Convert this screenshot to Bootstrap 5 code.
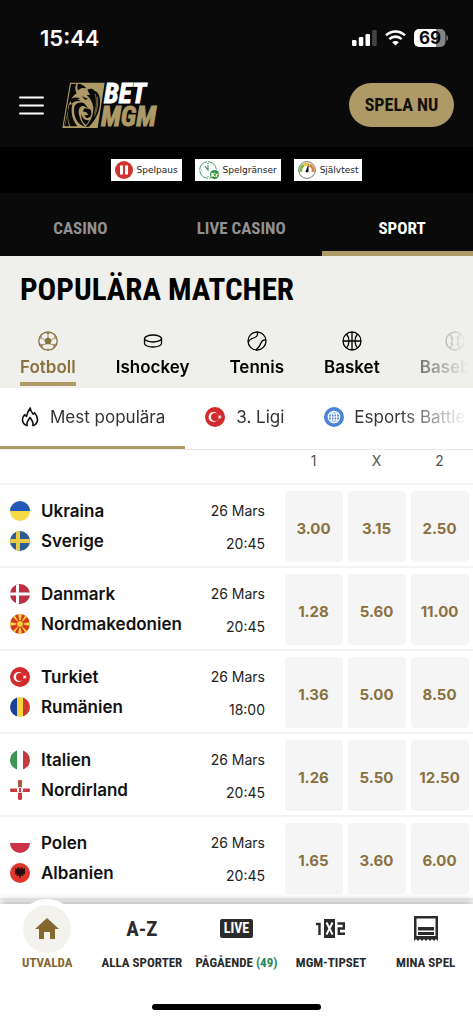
<!DOCTYPE html>
<html lang="sv">
<head>
<meta charset="utf-8">
<meta name="viewport" content="width=device-width, initial-scale=1">
<title>BetMGM – Populära matcher</title>
<link href="https://cdn.jsdelivr.net/npm/bootstrap@5.3.0/dist/css/bootstrap.min.css" rel="stylesheet">
<style>
:root { --gold: #ae9a66; --gold-dark: #8a7140; --ink: #0a0a0a; --narrow: "Roboto Condensed", "Liberation Sans Narrow", "Liberation Sans", sans-serif; }
body { font-family: Inter, "Liberation Sans", sans-serif; background: #fff; color: #111; font-size: 16px; }
a { color: inherit; text-decoration: none; }
.dark-top { background: #0a0a0a; color: #fff; }
.status-bar { height: 76px; padding: 0 25px 0 40px; }
.clock { font-size: 22px; font-weight: 600; }
.brand-bar { height: 71px; padding: 0 19px 13px; }
.brand-logo { margin-left: 18px; }
.play-btn { background: var(--gold); color: #14100a; border: 0; border-radius: 22px; width: 105px; height: 44px; font: bold 18px/44px var(--narrow); padding: 0; }
.safe-bar { height: 46px; background: #000; gap: 13px; }
.safe-link { background: #fff; color: #222; height: 22px; padding: 0 4px; gap: 4px; font: 9px/22px "DejaVu Sans", sans-serif; }
.main-tabs { height: 63px; overflow: hidden; }
.main-tabs a { flex: 0 0 34%; color: #919191; font: bold 17px/70px var(--narrow); text-align: center; border-bottom: 5px solid transparent; height: 63px; }
.main-tabs a.active { color: #fff; border-color: var(--gold); }
.sports-panel { background: #efefec; }
.page-title { font: bold 31px/40px var(--narrow); color: #000; margin: 0; padding: 14px 20px 0; }
.fade-right { -webkit-mask-image: linear-gradient(to right, #000 84%, transparent 99%); mask-image: linear-gradient(to right, #000 84%, transparent 99%); }
.sport-tabs { gap: 40px; padding: 21px 0 2px 20px; overflow: hidden; color: #000; }
.sport-tabs a { flex: none; font-weight: 600; font-size: 17px; line-height: 24px; border-bottom: 4px solid transparent; height: 55px; }
.sport-tabs a.active { color: var(--gold-dark); border-color: var(--gold); }
.sport-tabs svg { display: block; margin: 0 auto 4px; }
.league-wrap { border-bottom: 1px solid #e9e9e9; }
.league-tabs { overflow: hidden; color: #333; }
.league-tabs a { flex: none; height: 61px; line-height: 60px; font-size: 17px; gap: 10px; padding: 0 20px; border-bottom: 3px solid transparent; }
.league-tabs a.active { border-color: var(--gold); }
.odds-table { width: 100%; table-layout: fixed; border-collapse: separate; border-spacing: 0; }
.col-time { width: 84px; }
.col-gap { width: 17px; }
.col-odd { width: 63px; }
.col-edge { width: 2px; }
.odds-table thead th { height: 35px; font-size: 14px; font-weight: 400; color: #555; text-align: center; padding: 0 0 12px; border-bottom: 2px solid #f3f3f3; }
.odds-table tbody td { height: 83px; padding: 0; border-bottom: 2px solid #f3f3f3; }
.team { gap: 10px; padding-left: 10px; height: 30px; font-weight: 600; font-size: 17px; line-height: 28px; }
.team svg { flex: none; }
.odds-table tbody .kickoff { padding-top: 2px; font-size: 14px; line-height: 33px; text-align: right; color: #222; white-space: nowrap; }
.odd-btn { display: block; width: 58px; height: 71px; margin: 2px auto 0; border: 0; border-radius: 4px; background: #f5f5f5; color: var(--gold-dark); font-weight: 700; font-size: 15px; padding: 6px 0 0; }
.bottom-bar { background: #fff; box-shadow: 0 -3px 8px rgba(0,0,0,.28); height: 120px; }
.bottom-nav a { flex: 1 1 0; color: #2b2b2b; font: bold 13px/20px var(--narrow); text-align: center; white-space: nowrap; }
.bottom-nav a.active { color: #85682f; }
.nav-pic { height: 49px; display: flex; align-items: center; justify-content: center; }
.home-disc { width: 48px; height: 48px; border-radius: 50%; background: #f4f2ed; box-shadow: 0 0 0 6px #fff; }
.bottom-nav .az { font-size: 21px; }
.live-chip { background: #2b2b2b; color: #fff; font: bold 14px/19px var(--narrow); padding: 0 4px; border-radius: 2px; }
.count { color: #25875d; }
.home-line { width: 169px; height: 6px; border-radius: 3px; background: #000; margin: 31px auto 0; }
</style>
</head>
<body>
<svg width="0" height="0" class="position-absolute" aria-hidden="true">
  <defs>
    <clipPath id="disc"><circle cx="10" cy="10" r="10"/></clipPath>
    <symbol id="f-tr" viewBox="0 0 20 20"><circle cx="10" cy="10" r="10" fill="#d32b2c"/><circle cx="8.6" cy="10" r="5" fill="#fff"/><circle cx="10" cy="10" r="4" fill="#d32b2c"/><path d="M15.5 7.8v1.6l1.6.6-1.6.6v1.6l-1-1.3-1.7.5 1-1.4-1-1.4 1.7.5z" fill="#fff"/></symbol>
  </defs>
</svg>
<div class="d-flex flex-column min-vh-100">
<header class="dark-top">
  <div class="status-bar d-flex align-items-center justify-content-between">
    <span class="clock">15:44</span>
    <span class="d-flex align-items-center gap-2">
      <svg width="25" height="16" viewBox="0 0 25 16" fill="#fff"><rect y="10" width="4.5" height="6" rx="1.3"/><rect x="6.8" y="7" width="4.5" height="9" rx="1.3"/><rect x="13.5" y="4" width="4.5" height="12" rx="1.3"/><rect x="20.2" y="0" width="4.5" height="16" rx="1.3" fill="#444"/></svg>
      <svg width="21" height="16" viewBox="0 0 21 16" fill="none" stroke="#fff" stroke-width="2.6"><path d="M1 5.4a13.6 13.6 0 0 1 19 0M4.4 9.1a8.7 8.7 0 0 1 12.2 0"/><path d="M10.5 15.6 7.2 12.3a4.7 4.7 0 0 1 6.6 0z" fill="#fff" stroke="none"/></svg>
      <svg width="34" height="18" viewBox="0 0 34 18"><path d="M5 0h18v18H5a5 5 0 0 1-5-5V5a5 5 0 0 1 5-5z" fill="#fff"/><path d="M22 0h4.500a5 5 0 0 1 5 5v8a5 5 0 0 1-5 5H22zM32.500 6c2 1 2 5 0 6z" fill="#858585"/><text x="16" y="15" text-anchor="middle" font-family="Inter, sans-serif" font-weight="700" font-size="17" fill="#0a0a0a">69</text></svg>
    </span>
  </div>
  <div class="brand-bar d-flex align-items-center">
    <button class="btn p-0 border-0 lh-1" aria-label="Meny"><svg width="25" height="19" viewBox="0 0 25 19" stroke="#fff" stroke-width="2.2" stroke-linecap="round"><path d="M1.1 1.5h22.8M1.1 9.5h22.8M1.1 17.5h22.8"/></svg></button>
    <a href="#" class="brand-logo lh-1" aria-label="BetMGM"><svg width="101" height="48" viewBox="0 0 101 48">
      <g transform="scale(.3333) translate(-9 -7)">
        <path d="M33 12H137L116 148H10z" fill="#ae9a66"/>
        <g fill="#0a0a0a">
          <path d="M36 16 52 15C47 26 48 35 53 44 43 51 36 59 35 68 29 74 26 84 27 96L16 142H14z"/>
          <path d="M57 15C66 15 76 20 82 29L68 28 57 35C54 28 54 21 57 15z"/>
          <path d="M85 34C92 29 101 29 106 36 117 39 124 52 123 68 124 94 111 125 90 144L80 145C97 126 104 106 103 86 101 71 94 58 83 49L93 49z"/>
          <path d="M34 61C43 55 55 55 64 59L55 62 66 67 49 68 37 75z"/>
          <path d="M68 53 88 61 78 63z"/>
          <path d="M46 83C51 73 66 68 77 75L87 89 74 82C62 80 57 92 60 108 64 126 72 137 79 144 56 139 41 114 46 83z"/>
          <path d="M31 78 40 77C35 98 38 121 55 143H34C26 124 25 98 31 78z"/>
          <path d="M27 103C25 120 27 134 31 143H17z"/>
          <path d="M77 89 92 91C99 97 99 108 93 115L84 119 75 111 88 108 82 101 71 98z"/>
          <path d="M68 106C70 120 79 127 91 124L82 139C70 131 65 118 68 106z"/>
        </g>
        <path d="M108 45C114 61 113 85 107 104M115 54C118 73 115 95 106 113" fill="none" stroke="#ae9a66" stroke-width="2"/>
      </g>
      <g font-family="Roboto Condensed, Liberation Sans Narrow, sans-serif" font-weight="bold" font-style="italic" stroke-width=".9"><text x="42" y="22" font-size="27" fill="#fff" stroke="#fff">BET</text><text x="39" y="45" font-size="27" fill="#ae9a66" stroke="#ae9a66">MGM</text></g>
    </svg></a>
    <button class="play-btn ms-auto">SPELA NU</button>
  </div>
  <div class="safe-bar d-flex align-items-center justify-content-center">
    <a href="#" class="safe-link d-flex align-items-center"><svg width="18" height="18" viewBox="0 0 18 18"><circle cx="9" cy="9" r="9" fill="#cf3430"/><path d="M5 4.500h3v9H5zM10 4.500h3v9h-3z" fill="#fff"/></svg>Spelpaus</a>
    <a href="#" class="safe-link d-flex align-items-center"><svg width="20" height="18" viewBox="0 0 20 18" fill="none" stroke="#49996b"><circle cx="9" cy="9" r="8.300" stroke-dasharray="12 1"/><path d="M6 5.500 9 9V4M9 2v1M2 9h1M9 15v1" stroke-width="1.200"/><circle cx="15.500" cy="13.500" r="4.500" fill="#2f8f4e" stroke="none"/><text x="15.500" y="15.700" font-size="6" font-weight="bold" text-anchor="middle" fill="#fff" stroke="none">Kr</text></svg>Spelgränser</a>
    <a href="#" class="safe-link d-flex align-items-center"><svg width="18" height="18" viewBox="0 0 18 18" fill="none"><circle cx="9" cy="9" r="8.400" stroke="#777"/><path d="M3 11a6 6 0 0 1 3-7" stroke="#8bb63a" stroke-width="3"/><path d="M6 4a6 6 0 0 1 5-.5" stroke="#e7c33d" stroke-width="3"/><path d="M11.500 4a6 6 0 0 1 3.500 7" stroke="#d8873a" stroke-width="3"/><path d="M10.500 3 10.500 10.500a1.600 1.600 0 0 1-3 0z" fill="#111"/></svg>Självtest</a>
  </div>
  <nav class="main-tabs d-flex" aria-label="Huvudmeny"><a href="#">CASINO</a><a href="#">LIVE CASINO</a><a href="#" class="active">SPORT</a></nav>
</header>
<main>
  <section class="sports-panel">
    <h1 class="page-title">POPULÄRA MATCHER</h1>
    <div class="fade-right"><nav class="sport-tabs d-flex" aria-label="Sporter">
      <a href="#" class="active"><svg width="20" height="20" viewBox="0 0 20 20" fill="none" stroke="currentColor"><circle cx="10" cy="10" r="9.200" stroke-width="1.300"/><path d="m10 6 3.800 2.700-1.500 4.500H7.700L6.200 8.700zM7 1.500l3 2 3-2zM1 9l2.500-2 .5-3zM19 9l-2.500-2-.5-3zM4.500 16.500l.5-3-3-1zM15.500 16.500l-.5-3 3-1zM8 19l2-1.500 2 1.500z" fill="currentColor" stroke="none"/><path d="M10 3.500V6M3.500 7l2.700 1.700M16.500 7l-2.700 1.700M5 13.500l2.700-.3M15 13.500l-2.700-.3" stroke-width=".8"/></svg>Fotboll</a>
      <a href="#"><svg width="20" height="20" viewBox="0 0 20 20" fill="none" stroke="currentColor" stroke-width="1.300"><ellipse cx="10" cy="7.500" rx="8.500" ry="3.500"/><path d="M1.500 7.500v5c0 2 3.800 3.500 8.500 3.500s8.500-1.500 8.500-3.500v-5"/></svg>Ishockey</a>
      <a href="#"><svg width="20" height="20" viewBox="0 0 20 20" fill="none" stroke="currentColor" stroke-width="1.300"><circle cx="10" cy="10" r="9"/><path d="M10.500 1c.5 4-1 5-4 6-3 1-4.500 2-5 4M19 9c-2-.5-4 .2-5 3-1 3-3 5-5 7"/></svg>Tennis</a>
      <a href="#"><svg width="20" height="20" viewBox="0 0 20 20" fill="none" stroke="currentColor" stroke-width="1.300"><circle cx="10" cy="10" r="9"/><path d="M10 1v18M1 10h18M4.500 3c3.300 4 3.300 10 0 14M15.500 3c-3.300 4-3.300 10 0 14"/></svg>Basket</a>
      <a href="#" class="opacity-75"><svg width="20" height="20" viewBox="0 0 20 20" fill="none" stroke="currentColor" stroke-width="1.300"><circle cx="10" cy="10" r="9"/><path d="M5 3c3 4 3 10 0 14M15 3c-3 4-3 10 0 14M5.500 7.500l3-1M5.500 12.500l3 1M14.500 7.500l-3-1M14.500 12.500l-3 1"/></svg>Baseboll</a>
    </nav></div>
  </section>
  <div class="league-wrap"><div class="fade-right"><nav class="league-tabs d-flex" aria-label="Ligor">
    <a href="#" class="active d-flex align-items-center"><svg width="20" height="20" viewBox="0 0 20 20" fill="none" stroke="#111" stroke-width="1.600" stroke-linejoin="round"><path d="M7.500 18.800C4.500 18 2.500 15.800 2.500 12.600c0-2.300 1.300-3.700 2.200-4.900l1.800 1.800C7 6 8.500 3.500 10.200 1c.3 3 1.600 4.500 3 6.200l1.300-1.400c2 2.200 3 4.300 3 6.700 0 3.300-2 5.500-5 6.300"/><path d="M7.500 18.800c-2-3 .5-5 2.500-8.300 2 3.300 4.500 5.300 2.500 8.300"/></svg>Mest populära</a>
    <a href="#" class="d-flex align-items-center"><svg width="21" height="20"><use href="#f-tr" width="20" height="20"/></svg>3. Ligi</a>
    <a href="#" class="d-flex align-items-center"><svg width="20" height="20" viewBox="0 0 20 20" fill="none" stroke="#fff" stroke-width="1.100"><circle cx="10" cy="10" r="10" fill="#4b83d6" stroke="none"/><circle cx="10" cy="10" r="5.800"/><ellipse cx="10" cy="10" rx="2.800" ry="5.800"/><path d="M10 4v12M4 10h12M5 7h10M5 13h10"/></svg>Esports Battle</a>
  </nav></div></div>
  <table class="odds-table">
    <colgroup><col><col class="col-time"><col class="col-gap"><col class="col-odd"><col class="col-odd"><col class="col-odd"><col class="col-edge"></colgroup>
    <thead><tr><th colspan="3" aria-label="Match"></th><th scope="col">1</th><th scope="col">X</th><th scope="col">2</th><th></th></tr></thead>
    <tbody>
      <tr><td><div class="team d-flex align-items-center"><svg width="21" height="20"><g clip-path="url(#disc)"><path d="M0 0h20v10H0z" fill="#2458b8"/><path d="M0 10h20v10H0z" fill="#f6d946"/></g></svg>Ukraina</div><div class="team d-flex align-items-center"><svg width="21" height="20"><g clip-path="url(#disc)"><path d="M0 0h20v20H0z" fill="#285e91"/><path d="M6 0h4v20H6zM0 8h20v4H0z" fill="#edca45"/></g></svg>Sverige</div></td><td class="kickoff">26 Mars<br>20:45</td><td></td><td><button class="odd-btn">3.00</button></td><td><button class="odd-btn">3.15</button></td><td><button class="odd-btn">2.50</button></td><td></td></tr>
      <tr><td><div class="team d-flex align-items-center"><svg width="21" height="20"><g clip-path="url(#disc)"><path d="M0 0h20v20H0z" fill="#bd2f45"/><path d="M6 0h3v20H6zM0 8.500h20v3H0z" fill="#fff"/></g></svg>Danmark</div><div class="team d-flex align-items-center"><svg width="21" height="20"><g clip-path="url(#disc)"><path d="M0 0h20v20H0z" fill="#d23a20"/><path d="M8 0h4l-2 10zM8 20h4l-2-10zM0 8v4l10-2zM20 8v4l-10-2zM0 0h4l6 10zM20 0h-4l-6 10zM0 20h4l6-10zM20 20h-4l-6-10z" fill="#f5d13f"/><circle cx="10" cy="10" r="3.500" fill="#f5d13f" stroke="#d23a20"/></g></svg>Nordmakedonien</div></td><td class="kickoff">26 Mars<br>20:45</td><td></td><td><button class="odd-btn">1.28</button></td><td><button class="odd-btn">5.60</button></td><td><button class="odd-btn">11.00</button></td><td></td></tr>
      <tr><td><div class="team d-flex align-items-center"><svg width="21" height="20"><use href="#f-tr" width="20" height="20"/></svg>Turkiet</div><div class="team d-flex align-items-center"><svg width="21" height="20"><g clip-path="url(#disc)"><path d="M0 0h7v20H0z" fill="#1c3f9b"/><path d="M7 0h6v20H7z" fill="#f6d63f"/><path d="M13 0h7v20h-7z" fill="#cf3730"/></g></svg>Rumänien</div></td><td class="kickoff">26 Mars<br>18:00</td><td></td><td><button class="odd-btn">1.36</button></td><td><button class="odd-btn">5.00</button></td><td><button class="odd-btn">8.50</button></td><td></td></tr>
      <tr><td><div class="team d-flex align-items-center"><svg width="21" height="20"><g clip-path="url(#disc)"><path d="M0 0h7v20H0z" fill="#3c9555"/><path d="M7 0h6v20H7z" fill="#f7f7f7"/><path d="M13 0h7v20h-7z" fill="#c53a40"/></g></svg>Italien</div><div class="team d-flex align-items-center"><svg width="21" height="20"><g clip-path="url(#disc)"><path d="M8 0h4v20H8zM0 8.500h20v3.500H0z" fill="#c8383c"/><circle cx="10" cy="10" r="3" fill="#fff"/><path d="M9 8h2v4H9z" fill="#c8383c"/><path d="M8 2.500h4v4H8z" fill="#8d6b3c"/></g></svg>Nordirland</div></td><td class="kickoff">26 Mars<br>20:45</td><td></td><td><button class="odd-btn">1.26</button></td><td><button class="odd-btn">5.50</button></td><td><button class="odd-btn">12.50</button></td><td></td></tr>
      <tr><td><div class="team d-flex align-items-center"><svg width="21" height="20"><g clip-path="url(#disc)"><path d="M0 10h20v10H0z" fill="#cc334b"/></g></svg>Polen</div><div class="team d-flex align-items-center"><svg width="21" height="20"><circle cx="10" cy="10" r="10" fill="#e0352b"/><path d="M10 6 8.500 4 7 5l1.500 1.500L5 5v6l2.500.5L6 13l3-.5 1 3.500 1-3.500 3 .5-1.500-1.500L15 11V5l-3.500 1.500L13 5l-1.500-1z" fill="#2a0d0c"/></svg>Albanien</div></td><td class="kickoff">26 Mars<br>20:45</td><td></td><td><button class="odd-btn">1.65</button></td><td><button class="odd-btn">3.60</button></td><td><button class="odd-btn">6.00</button></td><td></td></tr>
    </tbody>
  </table>
</main>
<footer class="bottom-bar sticky-bottom mt-auto">
  <nav class="bottom-nav d-flex" aria-label="Sportmeny">
    <a href="#" class="active"><span class="nav-pic"><span class="home-disc d-flex align-items-center justify-content-center"><svg width="24" height="22" viewBox="0 0 24 22" fill="#85682f"><path d="M12 0 24 11h-4v10h-5v-7H9v7H4V11H0z"/></svg></span></span>UTVALDA</a>
    <a href="#"><span class="nav-pic az">A-Z</span>ALLA SPORTER</a>
    <a href="#"><span class="nav-pic"><span class="live-chip">LIVE</span></span>PÅGÅENDE <span class="count">(49)</span></a>
    <a href="#"><span class="nav-pic"><svg width="30" height="19" viewBox="0 0 30 19" fill="none" stroke="#2b2b2b" stroke-width="2.400"><path d="M0 5h3.500v11M21.500 4.500h6.300v5h-5v5.300H29"/><path d="M8 0h11v19H8z" fill="#2b2b2b" stroke="none"/><path d="m10.500 3.500 6 12M16.500 3.500l-6 12" stroke="#fff" stroke-width="2"/></svg></span>MGM-TIPSET</a>
    <a href="#"><span class="nav-pic"><svg width="24" height="26" viewBox="0 0 24 26" fill="#2b2b2b"><path fill-rule="evenodd" d="M0 0h24v25l-2-2-2 2-2-2-2 2-2-2-2 2-2-2-2 2-2-2-2 2-2-2-2 2zM2.500 2.500v17.500h19V2.500z"/><path d="M4 11h16v3.500H4zM4 16h16v3H4z"/></svg></span>MINA SPEL</a>
  </nav>
  <div class="home-line"></div>
</footer>
</div>
<script src="https://cdn.jsdelivr.net/npm/bootstrap@5.3.0/dist/js/bootstrap.bundle.min.js"></script>
</body>
</html>
